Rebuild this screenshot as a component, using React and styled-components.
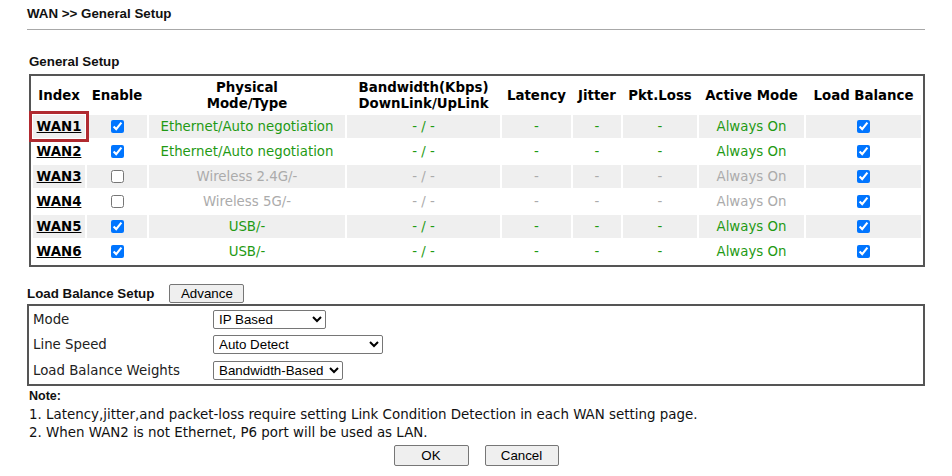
import React from "react";
import styled, { createGlobalStyle } from "styled-components";

const Global = createGlobalStyle`
  html, body { margin: 0; padding: 0; background: #fff; }
  body { font-family: "DejaVu Sans", Verdana, sans-serif; color: #000; }
`;

const GREEN = "#1f9a14";
const GRAY = "#ababab";

const Page = styled.div`
  width: 898px;
  padding: 0 27px;
`;

const Title = styled.h1`
  margin: 0;
  padding: 6px 0 7px;
  font: bold 13.33px/16px "Liberation Sans", Arial, sans-serif;
  color: #111;
  border-bottom: 1px solid #a8a8a8;
`;

const SectionLabel = styled.div`
  margin: 24px 0 4px 2px;
  font: bold 13.33px/16px "Liberation Sans", Arial, sans-serif;
  color: #111;
`;

const Table = styled.table`
  margin-left: 2px;
  width: 896px;
  box-sizing: border-box;
  border: 2px solid #555;
  border-collapse: separate;
  border-spacing: 2px;
  table-layout: fixed;
  font-size: 13.33px;
`;

const Col = styled.col`
  width: ${(p) => p.$w}px;
`;

const Th = styled.th`
  height: 35px;
  padding: 0;
  font-weight: bold;
  font-size: 13.33px;
  line-height: 16px;
  text-align: center;
  vertical-align: middle;
  white-space: nowrap;
  color: #000;
`;

const Tr = styled.tr`
  background: ${(p) => (p.$shade ? "#efefef" : "#fff")};
`;

const Td = styled.td`
  height: 23px;
  padding: 0;
  text-align: center;
  vertical-align: middle;
  white-space: nowrap;
  color: ${(p) => (p.$muted ? GRAY : GREEN)};
  line-height: 16px;
`;

const IndexCell = styled.td`
  height: 23px;
  padding: 0;
  text-align: center;
  vertical-align: middle;
  outline: ${(p) => (p.$selected ? "3px solid #b02a30" : "none")};
  outline-offset: ${(p) => (p.$selected ? "1px" : "0")};
`;

const WanLink = styled.a`
  color: #000;
  font-weight: bold;
  text-decoration: underline;
  cursor: pointer;
`;

const Check = styled.input.attrs({ type: "checkbox" })`
  margin: 0;
  width: 13px;
  height: 13px;
  vertical-align: middle;
  accent-color: #0075ff;
`;

const LbHeader = styled.div`
  display: flex;
  align-items: center;
  gap: 15px;
  margin-top: 17px;
  height: 19px;
  font: bold 13.33px/16px "Liberation Sans", Arial, sans-serif;
  color: #111;
`;

const Button = styled.button`
  box-sizing: border-box;
  height: ${(p) => p.$h || 19}px;
  width: ${(p) => p.$w}px;
  padding: 0;
  font: 13.33px "Liberation Sans", Arial, sans-serif;
  color: #000;
  background: #efefef;
  border: 1px solid #767676;
  border-radius: 2px;
`;

const LbBox = styled.div`
  margin-top: 1px;
  border: 2px solid #555;
  display: flex;
  flex-direction: column;
`;

const LbRow = styled.div`
  display: grid;
  grid-template-columns: 180px 1fr;
  align-items: center;
  height: ${(p) => p.$h}px;
  padding-left: 4px;
  font-size: 13.33px;
  color: #222;
`;

const Select = styled.select`
  box-sizing: border-box;
  width: ${(p) => p.$w}px;
  height: 19px;
  padding: 0 0 0 1px;
  font: 13.33px "Liberation Sans", Arial, sans-serif;
  color: #000;
  background: #fff;
  border: 1px solid #767676;
  border-radius: 2px;
`;

const Notes = styled.div`
  margin: 1px 0 0 2px;
  font: 14.9px/18px "DejaVu Sans Condensed", "DejaVu Sans", sans-serif;
  font-stretch: condensed;
  color: #111;
`;

const NoteTitle = styled.div`
  font: bold 12.5px/18px "Liberation Sans", Arial, sans-serif;
`;

const Actions = styled.div`
  display: flex;
  justify-content: center;
  gap: 16px;
  margin-top: 4px;
`;

const cols = [52, 60, 196, 153, 69, 48, 74, 105, 115];

const rows = [
  { name: "WAN1", en: true, phy: "Ethernet/Auto negotiation", muted: false },
  { name: "WAN2", en: true, phy: "Ethernet/Auto negotiation", muted: false },
  { name: "WAN3", en: false, phy: "Wireless 2.4G/-", muted: true },
  { name: "WAN4", en: false, phy: "Wireless 5G/-", muted: true },
  { name: "WAN5", en: true, phy: "USB/-", muted: false },
  { name: "WAN6", en: true, phy: "USB/-", muted: false },
];

export default function App() {
  return (
    <>
      <Global />
      <Page>
        <Title>WAN &gt;&gt; General Setup</Title>
        <SectionLabel>General Setup</SectionLabel>
        <Table>
          <colgroup>
            {cols.map((w, i) => (
              <Col key={i} $w={w} />
            ))}
          </colgroup>
          <thead>
            <tr>
              <Th>Index</Th>
              <Th>Enable</Th>
              <Th>
                Physical
                <br />
                Mode/Type
              </Th>
              <Th>
                Bandwidth(Kbps)
                <br />
                DownLink/UpLink
              </Th>
              <Th>Latency</Th>
              <Th>Jitter</Th>
              <Th>Pkt.Loss</Th>
              <Th>Active Mode</Th>
              <Th>Load Balance</Th>
            </tr>
          </thead>
          <tbody>
            {rows.map((r, i) => (
              <Tr key={r.name} $shade={i % 2 === 0}>
                <IndexCell $selected={i === 0}>
                  <WanLink>{r.name}</WanLink>
                </IndexCell>
                <Td>
                  <Check defaultChecked={r.en} />
                </Td>
                <Td $muted={r.muted}>{r.phy}</Td>
                <Td $muted={r.muted}>- / -</Td>
                <Td $muted={r.muted}>-</Td>
                <Td $muted={r.muted}>-</Td>
                <Td $muted={r.muted}>-</Td>
                <Td $muted={r.muted}>Always On</Td>
                <Td>
                  <Check defaultChecked />
                </Td>
              </Tr>
            ))}
          </tbody>
        </Table>

        <LbHeader>
          <span>Load Balance Setup</span>
          <Button $w={75}>Advance</Button>
        </LbHeader>
        <LbBox>
          <LbRow $h={26}>
            <span>Mode</span>
            <Select $w={113} defaultValue="ip">
              <option value="ip">IP Based</option>
            </Select>
          </LbRow>
          <LbRow $h={25}>
            <span>Line Speed</span>
            <Select $w={170} defaultValue="auto">
              <option value="auto">Auto Detect</option>
            </Select>
          </LbRow>
          <LbRow $h={27}>
            <span>Load Balance Weights</span>
            <Select $w={130} defaultValue="bw">
              <option value="bw">Bandwidth-Based</option>
            </Select>
          </LbRow>
        </LbBox>

        <Notes>
          <NoteTitle>Note:</NoteTitle>
          <div>1. Latency,jitter,and packet-loss require setting Link Condition Detection in each WAN setting page.</div>
          <div>2. When WAN2 is not Ethernet, P6 port will be used as LAN.</div>
        </Notes>
        <Actions>
          <Button $w={75} $h={21}>OK</Button>
          <Button $w={74} $h={21}>Cancel</Button>
        </Actions>
      </Page>
    </>
  );
}
